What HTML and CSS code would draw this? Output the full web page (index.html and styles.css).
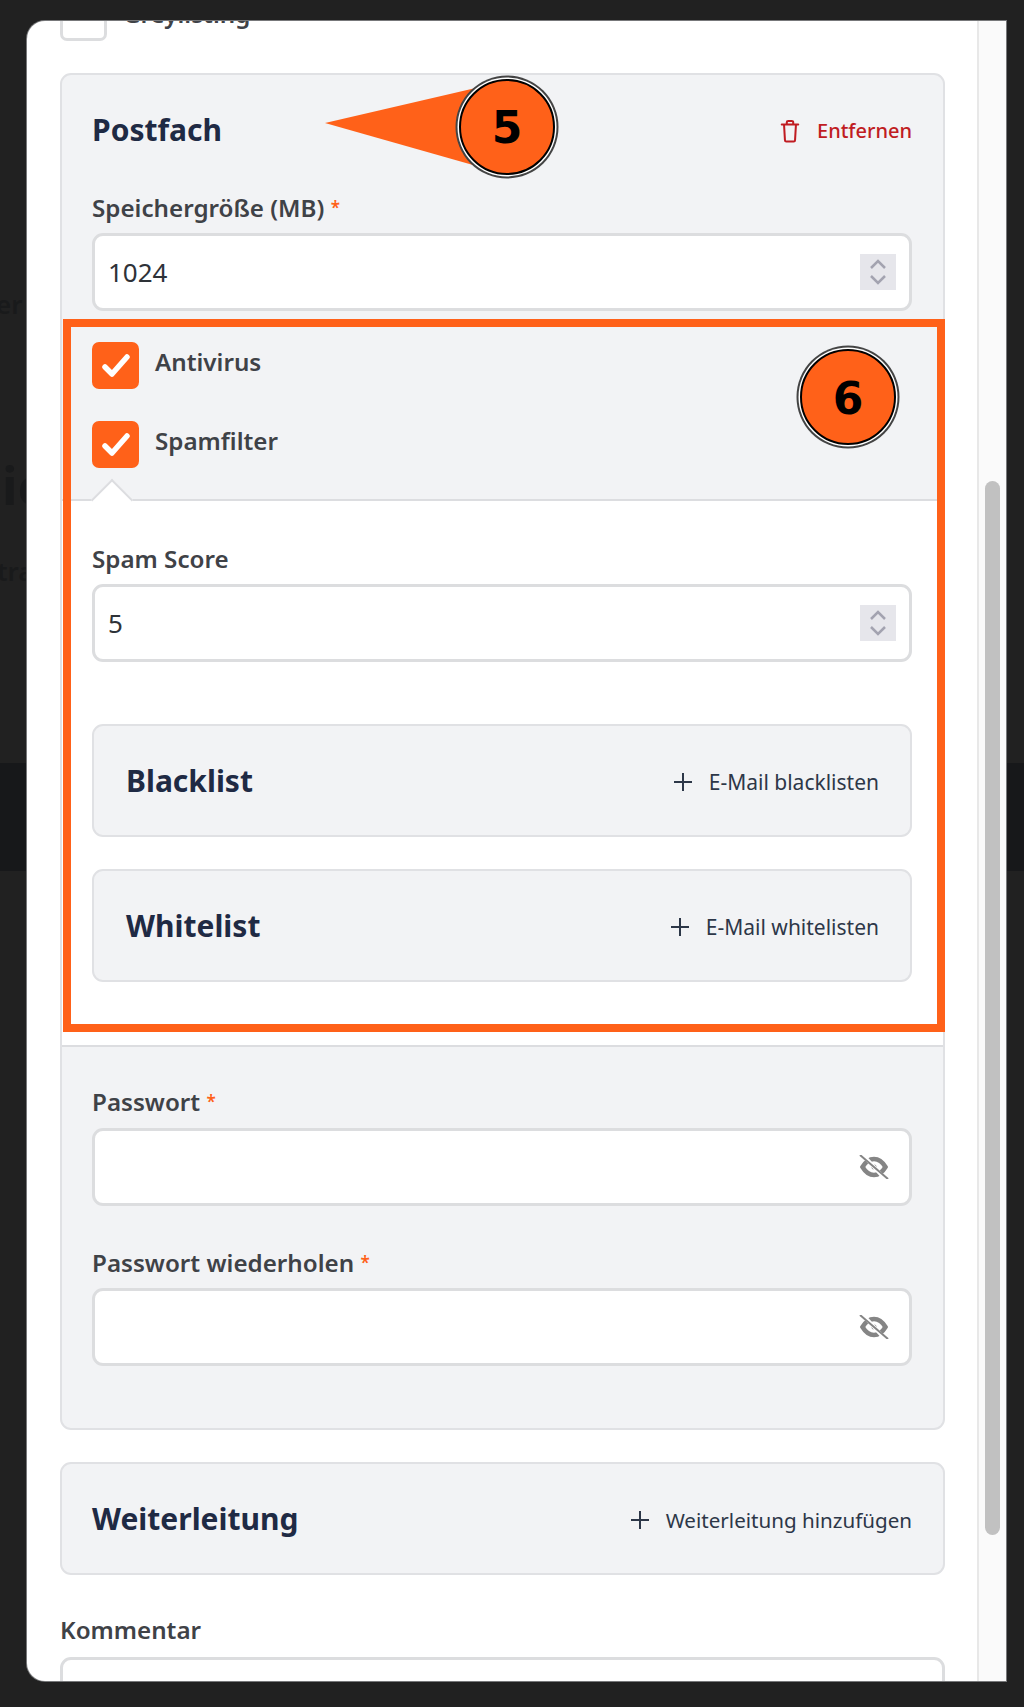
FILE: index.html
```html
<!DOCTYPE html>
<html lang="de">
  <head>
    <meta charset="utf-8">
    <title>Postfach</title>
    <link rel="stylesheet" href="styles.css">
  </head>
  <body>
    <!-- page behind the dialog, only a few letters peek out -->
    <div class="backdrop-text bt-er">er</div>
    <div class="backdrop-text bt-id">ic</div>
    <div class="backdrop-text bt-tr">tra</div>
    <div class="backdrop-band"></div>

    <div class="modal">
      <div class="modal-body">
        <label class="check check-top">
          <span class="box"></span>
          <span class="check-text">Greylisting</span>
        </label>

        <section class="card">
          <div class="card-head">
            <h2>Postfach</h2>
            <a class="action danger">
              <svg class="icon-trash" viewBox="0 0 24 26" fill="none" stroke="currentColor" stroke-width="2.2" stroke-linejoin="round" stroke-linecap="round"><path d="M3 6h18M8.500 6V3.500a1.500 1.500 0 0 1 1.500-1.500h4a1.500 1.500 0 0 1 1.500 1.500V6M5.500 6l1 17a1.500 1.500 0 0 0 1.500 1.500h8a1.500 1.500 0 0 0 1.500-1.500l1-17"/></svg>
              Entfernen
            </a>
          </div>

          <div class="label first">Speichergröße (MB) <span class="req">*</span></div>
          <div class="input">
            <input type="text" value="1024">
            <span class="spinner"><svg viewBox="0 0 36 36" fill="none" stroke="#a3a3b0" stroke-width="2.500"><path d="M11 14l7-7 7 7M11 22l7 7 7-7"/></svg></span>
          </div>

          <div class="checks">
            <label class="check">
              <span class="box on"><svg viewBox="0 0 47 47" fill="none" stroke="#fff" stroke-width="5.500" stroke-linecap="round" stroke-linejoin="round"><path d="M13 25l7 7 15-17"/></svg></span>
              <span class="check-text">Antivirus</span>
            </label>
            <label class="check">
              <span class="box on"><svg viewBox="0 0 47 47" fill="none" stroke="#fff" stroke-width="5.500" stroke-linecap="round" stroke-linejoin="round"><path d="M13 25l7 7 15-17"/></svg></span>
              <span class="check-text">Spamfilter</span>
            </label>
          </div>

          <div class="panel">
            <span class="notch"></span>
            <div class="label">Spam Score</div>
            <div class="input">
              <input type="text" value="5">
              <span class="spinner"><svg viewBox="0 0 36 36" fill="none" stroke="#a3a3b0" stroke-width="2.500"><path d="M11 14l7-7 7 7M11 22l7 7 7-7"/></svg></span>
            </div>

            <div class="sub-card first-sub">
              <h2>Blacklist</h2>
              <a class="action">
                <svg class="icon-plus" viewBox="0 0 20 20" fill="none" stroke="currentColor" stroke-width="2"><path d="M10 1v18M1 10h18"/></svg>
                E-Mail blacklisten
              </a>
            </div>
            <div class="sub-card">
              <h2>Whitelist</h2>
              <a class="action">
                <svg class="icon-plus" viewBox="0 0 20 20" fill="none" stroke="currentColor" stroke-width="2"><path d="M10 1v18M1 10h18"/></svg>
                E-Mail whitelisten
              </a>
            </div>
          </div>

          <div class="label pw-first">Passwort <span class="req">*</span></div>
          <div class="input">
            <input type="password">
            <svg class="icon-eye" viewBox="0 0 30 24" fill="none" stroke="#858585"><path stroke-width="4.500" d="M3.500 12c3-5 7-8 11.500-8s8.500 3 11.500 8c-3 5-7 8-11.500 8s-8.500-3-11.500-8z"/><circle cx="15" cy="12" r="2.500" fill="#858585" stroke="none"/><path stroke="#fff" stroke-width="4" d="M3 -1l24 26"/><path stroke-width="2" d="M1 0l28 24"/></svg>
          </div>

          <div class="label">Passwort wiederholen <span class="req">*</span></div>
          <div class="input">
            <input type="password">
            <svg class="icon-eye" viewBox="0 0 30 24" fill="none" stroke="#858585"><path stroke-width="4.500" d="M3.500 12c3-5 7-8 11.500-8s8.500 3 11.500 8c-3 5-7 8-11.500 8s-8.500-3-11.500-8z"/><circle cx="15" cy="12" r="2.500" fill="#858585" stroke="none"/><path stroke="#fff" stroke-width="4" d="M3 -1l24 26"/><path stroke-width="2" d="M1 0l28 24"/></svg>
          </div>
        </section>

        <section class="card card-row">
          <h2>Weiterleitung</h2>
          <a class="action">
            <svg class="icon-plus" viewBox="0 0 20 20" fill="none" stroke="currentColor" stroke-width="2"><path d="M10 1v18M1 10h18"/></svg>
            Weiterleitung hinzufügen
          </a>
        </section>

        <div class="label label-last">Kommentar</div>
        <div class="input input-area"></div>
      </div>

      <div class="scrollbar"><div class="thumb"></div></div>
    </div>

    <!-- annotations on top of the screenshot -->
    <div class="mark-frame"></div>
    <svg class="callouts" viewBox="0 0 1024 1707">
      <polygon class="tail" points="325,123 480,87 480,167"/>
      <circle class="ring-outer" cx="507" cy="127" r="51.500"/>
      <circle class="ring-white" cx="507" cy="127" r="49.500"/>
      <circle class="ring-fill" cx="507" cy="127" r="47"/>
      <text class="digit" x="507" y="143">5</text>
      <circle class="ring-outer" cx="848" cy="397" r="51.500"/>
      <circle class="ring-white" cx="848" cy="397" r="49.500"/>
      <circle class="ring-fill" cx="848" cy="397" r="47"/>
      <text class="digit" x="848" y="414">6</text>
    </svg>
  </body>
</html>
```

FILE: styles.css
```css
* {
    box-sizing: border-box;
}

body {
    position: relative;
    margin: 0;
    height: 1707px;
    padding: 21px 0 0 27px;
    overflow: hidden;
    background-color: #212121;
    font-family: 'Noto Sans', sans-serif;
}

/* what shows of the page behind the dialog */
.backdrop-text {
    position: absolute;
    left: -2px;
    color: #191a1b;
    font-weight: 600;
    font-size: 26px;
    line-height: 30px;
}
.bt-er { top: 289px; left: -4px; }
.bt-id { top: 450px; left: 2px; font-size: 52px; line-height: 70px; font-weight: 700; }
.bt-tr { top: 556px; left: -3px; }

.backdrop-band {
    position: absolute;
    top: 763px;
    left: 0;
    width: 100%;
    height: 108px;
    background-color: #17181a;
}

.modal {
    position: relative;
    display: flex;
    width: 979px;
    height: 1660px;
    overflow: hidden;
    background-color: #fff;
    border-radius: 18px 0 0 18px;
    box-shadow: 0 0 0 1px #77787a;
}

.modal-body {
    flex: 1;
    margin-top: -27px;
    padding: 0 32px 0 33px;
}

.scrollbar {
    width: 29px;
    padding: 460px 6px 0 6px;
    background-color: #fafafa;
    border-left: 2px solid #e8e8e8;
}

.thumb {
    width: 15px;
    height: 1054px;
    background-color: #c1c1c1;
    border-radius: 8px;
}

/* cards */
.card {
    margin-top: 32px;
    padding: 0 31px 62px 30px;
    background-color: #f2f3f5;
    border: 2px solid #e0e1e4;
    border-radius: 11px;
}

.card-head {
    display: flex;
    justify-content: space-between;
    align-items: center;
    height: 108px;
}

.card-row {
    display: flex;
    justify-content: space-between;
    align-items: center;
    height: 113px;
    padding: 0 31px 0 30px;
}

h2 {
    margin: 0;
    color: #1f2a44;
    font-size: 30px;
    font-weight: 700;
}

.action {
    display: flex;
    align-items: center;
    padding-top: 3px;
    color: #2d3748;
    font-size: 20.600px;
    font-weight: 400;
}

.danger {
    color: #c01c22;
    font-size: 20px;
    font-weight: 500;
}

.icon-trash {
    width: 22px;
    height: 24px;
    margin-right: 16px;
}

.icon-plus {
    width: 20px;
    height: 20px;
    margin-right: 16px;
}

/* fields */
.label {
    margin: 39px 0 7px;
    color: #3f4247;
    font-size: 24.200px;
    font-weight: 600;
    line-height: 36px;
}
.label.first { margin-top: 7px; }
.label.pw-first { margin: 37px 0 8px; }
.label.label-last { margin: 37px 0 9px; }

.req {
    color: #ff6119;
    font-size: 17px;
    vertical-align: 3px;
}

.input {
    display: flex;
    align-items: center;
    height: 78px;
    padding: 0 13px;
    background-color: #fff;
    border: 3px solid #dcdddf;
    border-radius: 11px;
}

.input input {
    flex: 1;
    min-width: 0;
    border: none;
    outline: none;
    background: none;
    padding: 0;
    color: #2e3238;
    font-family: inherit;
    font-size: 26px;
}

.input-area {
    height: 120px;
}

.spinner {
    width: 36px;
    height: 36px;
    background-color: #e6e6eb;
}

.spinner svg {
    display: block;
}

.icon-eye {
    width: 30px;
    height: 24px;
    margin-right: 7px;
}

/* checkboxes */
.checks {
    display: flex;
    flex-direction: column;
    gap: 32px;
    margin-top: 31px;
}

.check {
    display: flex;
    gap: 16px;
}

.box {
    flex: none;
    width: 47px;
    height: 47px;
    background-color: #fff;
    border: 3px solid #dcdddf;
    border-radius: 7px;
}

.box.on {
    background-color: #ff6119;
    border: none;
}

.box svg {
    display: block;
}

.check-text {
    color: #3f4247;
    font-size: 24.200px;
    font-weight: 600;
    line-height: 40px;
}

/* white sub panel of the spam filter */
.panel {
    position: relative;
    margin: 31px -31px 0 -30px;
    padding: 0 31px 63px 30px;
    background-color: #fff;
    border-top: 2px solid #dcdde0;
    border-bottom: 2px solid #dcdde0;
}

.panel .label:first-of-type {
    margin-top: 40px;
}

.notch {
    position: absolute;
    top: -16px;
    left: 35px;
    width: 30px;
    height: 30px;
    background-color: #fff;
    border-top: 2px solid #dcdde0;
    border-left: 2px solid #dcdde0;
    transform: rotate(45deg);
}

.sub-card {
    display: flex;
    justify-content: space-between;
    align-items: center;
    height: 113px;
    margin-top: 32px;
    padding: 0 31px 0 32px;
    background-color: #f2f3f5;
    border: 2px solid #e0e1e4;
    border-radius: 11px;
}

.sub-card .action {
    font-size: 21px;
}

.first-sub {
    margin-top: 62px;
}

/* annotations */
.mark-frame {
    position: absolute;
    top: 319px;
    left: 63px;
    width: 882px;
    height: 713px;
    border: 8px solid #ff6119;
}

.callouts {
    position: absolute;
    top: 0;
    left: 0;
    width: 1024px;
    height: 1707px;
}

.tail { fill: #ff6119; }
.ring-outer { fill: #444; }
.ring-white { fill: #fff; }
.ring-fill { fill: #ff6119; stroke: #000; stroke-width: 2px; }

.digit {
    fill: #000;
    font-family: 'DejaVu Sans', sans-serif;
    font-size: 44px;
    font-weight: 700;
    text-anchor: middle;
}
```
